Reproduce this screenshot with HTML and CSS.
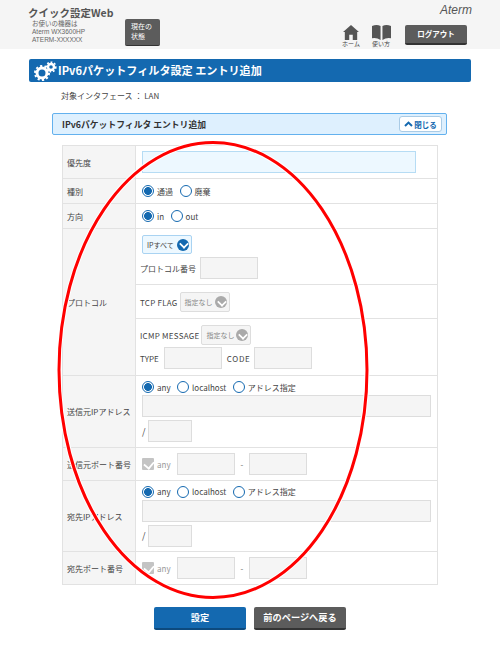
FILE: index.html
```html
<!DOCTYPE html>
<html lang="ja">
<head>
<meta charset="utf-8">
<title>クイック設定Web</title>
<link rel="stylesheet" href="styles.css">
</head>
<body>
<header class="hdr">
  <div class="hdr-left">
    <div class="hdr-title">クイック設定Web</div>
    <div class="hdr-device">
      <div class="dev-text">お使いの機器は<br>Aterm WX3600HP<br>ATERM-XXXXXX</div>
      <div class="btn-status">現在の<br>状態</div>
    </div>
  </div>
  <div class="hdr-right">
    <div class="logo">Aterm</div>
    <div class="nav">
      <div class="nav-item">
        <svg class="nav-icon" width="16" height="15" viewBox="0 0 18 17"><path fill="#555" d="M9 0 18 8 16 8 16 17 11 17 11 11 7 11 7 17 2 17 2 8 0 8Z"/></svg>
        <span>ホーム</span>
      </div>
      <div class="nav-item book">
        <svg class="nav-icon" width="19" height="15" viewBox="0 0 20 17" preserveAspectRatio="none"><path fill="#555" d="M0 1Q5-1 9 1V17Q5 14 0 15ZM11 1Q15-1 20 1V15Q15 14 11 17Z"/></svg>
        <span>使い方</span>
      </div>
      <div class="btn-logout">ログアウト</div>
    </div>
  </div>
</header>

<main class="main">
  <h1 class="page-title">
    <svg class="gear" width="23" height="20" viewBox="0 0 23 20">
      <circle cx="8" cy="12" r="5" fill="none" stroke="#fff" stroke-width="3"/>
      <circle cx="8" cy="12" r="7" fill="none" stroke="#fff" stroke-width="2" stroke-dasharray="2.2 2.2"/>
      <circle cx="17" cy="6" r="3" fill="none" stroke="#fff" stroke-width="2.4"/>
      <circle cx="17" cy="6" r="4.8" fill="none" stroke="#fff" stroke-width="1.6" stroke-dasharray="1.8 1.8"/>
    </svg>
    IPv6パケットフィルタ設定 エントリ追加
  </h1>
  <p class="iface">対象インタフェース ： LAN</p>
  <div class="acc">
    <span class="acc-title">IPv6パケットフィルタ エントリ追加</span>
    <span class="acc-close">
      <svg width="9" height="6" viewBox="0 0 9 6"><path d="M1 5 4.5 1.6 8 5" fill="none" stroke="#1469b0" stroke-width="2"/></svg>閉じる
    </span>
  </div>

  <table class="form">
    <tr class="r-prio">
      <th>優先度</th>
      <td><div class="inp inp-prio"></div></td>
    </tr>
    <tr class="r-kind">
      <th>種別</th>
      <td><div class="line">
        <label class="opt"><i class="radio on"></i>通過</label>
        <label class="opt"><i class="radio"></i>廃棄</label>
      </div></td>
    </tr>
    <tr class="r-dir">
      <th>方向</th>
      <td><div class="line">
        <label class="opt"><i class="radio on"></i>in</label>
        <label class="opt"><i class="radio"></i>out</label>
      </div></td>
    </tr>
    <tr>
      <th>プロトコル</th>
      <td class="proto">
        <div class="sec sec-a">
          <div class="sel sel-ip">IPすべて<i class="chev blue"></i></div>
          <div class="line"><span>プロトコル番号</span><div class="inp w58"></div></div>
        </div>
        <div class="sec sec-b">
          <div class="line"><span>TCP FLAG</span><div class="sel sel-off">指定なし<i class="chev"></i></div></div>
        </div>
        <div class="sec sec-c">
          <div class="line"><span>ICMP MESSAGE</span><div class="sel sel-off">指定なし<i class="chev"></i></div></div>
          <div class="line"><span>TYPE</span><div class="inp w58"></div><span class="code">CODE</span><div class="inp w58"></div></div>
        </div>
      </td>
    </tr>
    <tr>
      <th>送信元IPアドレス</th>
      <td class="addr addr-first">
        <div class="line">
          <label class="opt"><i class="radio on"></i>any</label>
          <label class="opt"><i class="radio"></i>localhost</label>
          <label class="opt"><i class="radio"></i>アドレス指定</label>
        </div>
        <div class="inp wfull"></div>
        <div class="line"><span class="slash">/</span><div class="inp w43"></div></div>
      </td>
    </tr>
    <tr class="r-port">
      <th>送信元ポート番号</th>
      <td><div class="line">
        <i class="check"></i><span class="dim">any</span>
        <div class="inp w58"></div><span class="dash">-</span><div class="inp w58"></div>
      </div></td>
    </tr>
    <tr>
      <th>宛先IPアドレス</th>
      <td class="addr">
        <div class="line">
          <label class="opt"><i class="radio on"></i>any</label>
          <label class="opt"><i class="radio"></i>localhost</label>
          <label class="opt"><i class="radio"></i>アドレス指定</label>
        </div>
        <div class="inp wfull"></div>
        <div class="line"><span class="slash">/</span><div class="inp w43"></div></div>
      </td>
    </tr>
    <tr class="r-port">
      <th>宛先ポート番号</th>
      <td><div class="line">
        <i class="check"></i><span class="dim">any</span>
        <div class="inp w58"></div><span class="dash">-</span><div class="inp w58"></div>
      </div></td>
    </tr>
  </table>

  <div class="actions">
    <div class="btn btn-primary">設定</div>
    <div class="btn btn-back">前のページへ戻る</div>
  </div>
</main>

<svg class="ring" width="500" height="645" viewBox="0 0 500 645">
  <ellipse cx="213" cy="370" rx="154" ry="227.5" fill="none" stroke="#fff" stroke-width="5"/>
  <ellipse cx="213" cy="370" rx="154" ry="227.5" fill="none" stroke="#f00" stroke-width="3"/>
</svg>
</body>
</html>
```
FILE: styles.css
```css
* { box-sizing: border-box; }
html, body { margin: 0; padding: 0; background: #fff; }
body {
  position: relative;
  width: 500px;
  height: 645px;
  overflow: hidden;
  font-family: "Noto Sans CJK JP", "Liberation Sans", sans-serif;
  font-size: 8px;
  color: #444;
}
.hdr {
  height: 49px;
  background: #f5f5f5;
  display: flex;
  justify-content: space-between;
  padding: 6px 28px 0 28px;
}
.hdr-title { font-size: 10.5px; font-weight: 700; line-height: 13px; color: #555; }
.hdr-device { display: flex; margin-top: 0; padding-left: 4px; }
.dev-text {
  width: 94px;
  margin-top: 1px;
  font-family: "Liberation Sans", "Noto Sans CJK JP", sans-serif;
  font-size: 6.5px;
  line-height: 8px;
  color: #666;
  white-space: nowrap;
}
.btn-status {
  width: 35px;
  height: 27px;
  margin-left: -1px;
  background: #5c5c5c;
  border-bottom: 1px solid #333;
  border-radius: 2px;
  color: #fff;
  font-family: "Liberation Sans", "Noto Sans CJK JP", sans-serif;
  font-size: 7px;
  line-height: 10px;
  padding: 3px 0 0 6px;
}
.hdr-right { display: flex; flex-direction: column; align-items: flex-end; }
.logo {
  font-family: "Liberation Sans", sans-serif;
  font-style: italic;
  font-size: 12px;
  line-height: 12px;
  color: #555;
  margin-top: -2px;
}
.nav { display: flex; align-items: flex-start; margin: 9px 5px 0 0; }
.nav-item { display: flex; flex-direction: column; align-items: center; width: 18px; margin-right: 12px; font-size: 6px; line-height: 7px; color: #444; white-space: nowrap; }
.nav-item.book { margin-right: 15px; }
.nav-icon { display: block; }
.btn-logout {
  width: 62px;
  height: 20px;
  background: #5c5c5c;
  border-bottom: 2px solid #333;
  border-radius: 2px;
  color: #fff;
  font-size: 7.5px;
  font-weight: 700;
  line-height: 18px;
  text-align: center;
}
.main { padding-top: 10px; }
.page-title {
  display: flex;
  align-items: center;
  gap: 1px;
  margin: 0 29px;
  height: 23px;
  padding-left: 5px;
  background: #1469b0;
  border-radius: 2px;
  color: #fff;
  font-size: 11.1px;
  font-weight: 700;
  line-height: 23px;
}
.iface { margin: 7px 0 0 61px; font-size: 8px; line-height: 13px; color: #444; }
.acc {
  display: flex;
  justify-content: space-between;
  align-items: center;
  margin: 11px 53px 0 52px;
  height: 22px;
  padding: 0 4px 0 9px;
  background: #def0fe;
  border: 1px solid #63b1ee;
  border-radius: 2px;
}
.acc-title { font-size: 8.8px; font-weight: 700; color: #333; }
.acc-close {
  display: flex;
  align-items: center;
  justify-content: center;
  gap: 1px;
  width: 43px;
  height: 16px;
  background: #fff;
  border: 1px solid #a9cbe6;
  border-radius: 3px;
  font-size: 7.5px;
  font-weight: 700;
  color: #1469b0;
}
.form {
  margin: 10px 0 0 62px;
  width: 376px;
  border-collapse: collapse;
  table-layout: fixed;
}
.form th, .form td { border: 1px solid #e2e2e2; padding: 0; vertical-align: middle; }
.form th {
  width: 73px;
  background: #f5f5f5;
  padding-left: 4px;
  text-align: left;
  font-size: 8px;
  font-weight: 400;
  white-space: nowrap;
}
.form td { padding-left: 6px; }
.r-prio { height: 33px; }
.r-kind, .r-dir { height: 25px; }
.r-port { height: 33px; }
.line { display: flex; align-items: center; }
.opt { display: flex; align-items: center; margin-right: 6.5px; }
.radio {
  display: block;
  width: 12px;
  height: 12px;
  margin-right: 3px;
  background: #fff;
  border: 1px solid #1469b0;
  border-radius: 50%;
}
.radio.on { background: radial-gradient(circle, #1469b0 0 3.6px, #fff 4.2px); }
.inp { height: 22px; background: #f5f5f5; border: 1px solid #ddd; }
.inp-prio { width: 274px; background: #edf8ff; border-color: #b6dcf4; }
.w58 { width: 58px; }
.w43 { width: 44px; }
.wfull { width: 289px; }
.form td.proto { padding: 0; }
.sec { padding-left: 4px; }
.sec + .sec { border-top: 1px solid #e2e2e2; }
.sec-a { height: 55px; padding-top: 6px; }
.sec-a .sel { margin-left: 2px; }
.sec-a .line { margin-top: 3px; }
.sec-a .line span { margin-right: 4px; }
.sec-b { height: 34px; padding-top: 7px; letter-spacing: .25px; }
.sec-b .sel, .sec-c .sel { letter-spacing: 0; }
.sec-b span, .sec-c .line > span:first-child { margin-right: 2px; }
.sec-c { height: 57px; padding-top: 6px; }
.sec-c .line:first-child > span { letter-spacing: .25px; }
.sec-c .line + .line { margin-top: 2px; }
.sec-c .line:last-child > span:first-child { margin-right: 5px; }
.code { margin: 0 3px 0 5px; letter-spacing: .7px; }
.sel {
  display: inline-flex;
  align-items: center;
  justify-content: space-between;
  padding: 0 2px 0 4px;
  border-radius: 2px;
  font-size: 7px;
  white-space: nowrap;
}
.sel-ip { width: 50px; height: 19px; background: #edf8ff; border: 1px solid #a9d3f2; }
.sel-off { width: 50px; height: 20px; background: #f5f5f5; border: 1px solid #ddd; color: #888; }
.chev {
  position: relative;
  display: block;
  flex: none;
  width: 12px;
  height: 12px;
  border-radius: 50%;
  background: #aaa;
}
.chev.blue { background: #1469b0; }
.chev::after {
  content: "";
  position: absolute;
  left: 3px;
  top: 1.5px;
  width: 6px;
  height: 6px;
  border-right: 2px solid #fff;
  border-bottom: 2px solid #fff;
  transform: rotate(45deg) scale(.85);
}
.addr { height: 71px; padding-top: 3px; }
.addr-first { height: 72px; }
.addr .wfull { margin: 2px 0 3px 0; }
.slash { width: 6px; font-size: 9px; }
.check {
  display: block;
  position: relative;
  width: 12px;
  height: 12px;
  background: #c4c4c4;
  border-radius: 1px;
}
.check::after {
  content: "";
  position: absolute;
  left: 3px;
  top: 1px;
  width: 6px;
  height: 8px;
  border-right: 2px solid #fff;
  border-bottom: 2px solid #fff;
  transform: rotate(40deg) scale(.9);
}
.dim { width: 20px; margin-left: 3px; color: #999; }
.dash { width: 14px; text-align: center; color: #666; }
.actions { display: flex; justify-content: center; gap: 8px; margin-top: 22px; }
.btn {
  width: 92px;
  height: 23px;
  border-radius: 2px;
  color: #fff;
  font-size: 9.2px;
  font-weight: 700;
  line-height: 21px;
  text-align: center;
  border-bottom: 2px solid #333;
}
.btn-primary { background: #1469b0; border-bottom-color: #0d4a7e; }
.btn-back { background: #5c5c5c; }
.ring { position: absolute; left: 0; top: 0; pointer-events: none; }
```
